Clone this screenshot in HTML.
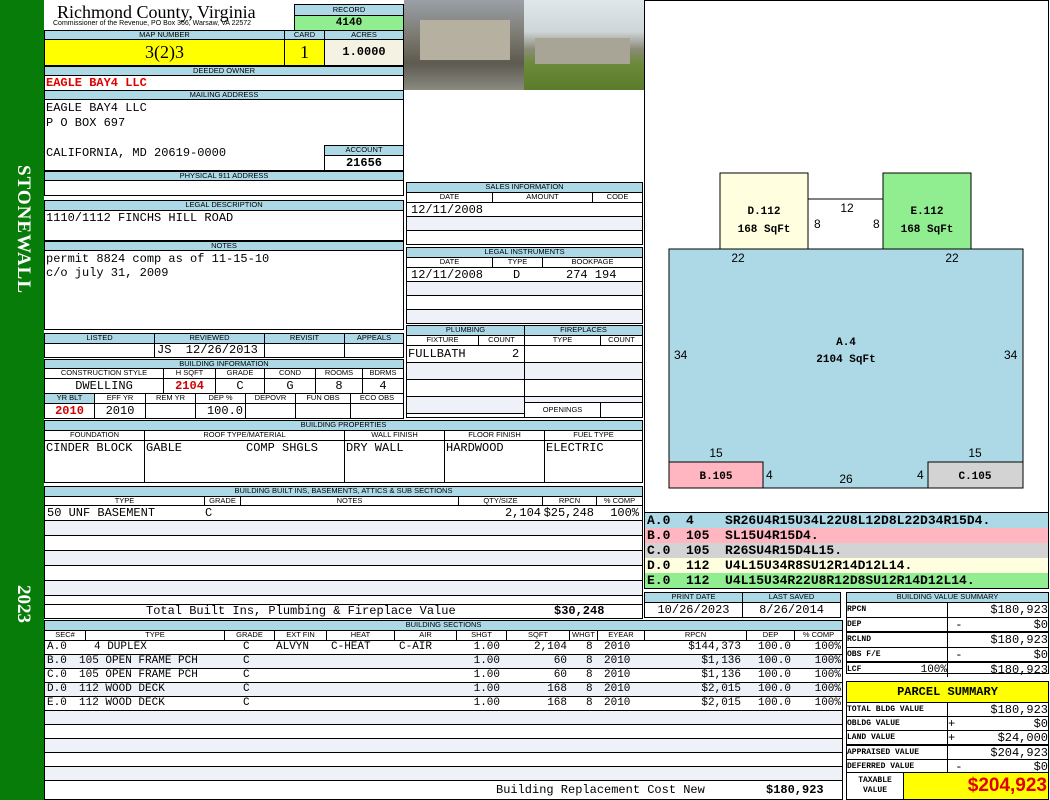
<!DOCTYPE html>
<html><head><meta charset="utf-8"><style>
body{margin:0;width:1050px;height:800px;overflow:hidden;background:#fff;position:relative;font-family:"Liberation Sans",sans-serif}
.a{position:absolute;box-sizing:border-box}
.h{position:absolute;box-sizing:border-box;background:#add8e6;border:1px solid #000;font-size:7.5px;text-align:center;line-height:8px;white-space:nowrap;overflow:hidden}
.s{position:absolute;box-sizing:border-box;background:#fff;border:1px solid #000;font-size:7.5px;text-align:center;line-height:8px;white-space:nowrap;overflow:hidden}
.b{position:absolute;box-sizing:border-box;border:1px solid #000;background:#fff}
.m{position:absolute;font-family:"Liberation Mono",monospace;font-size:12px;white-space:pre;line-height:13px}
.r{text-align:right}
.g{background:#eef2f8}
.row{position:absolute;left:0;width:1050px;height:14px;font-family:"Liberation Mono",monospace;font-size:11px;line-height:14px;white-space:pre}
.row span{position:absolute}
.row .R{text-align:right}
.v12{font-size:12px !important}
</style></head><body>
<div class="a" style="left:0;top:0;width:44px;height:800px;background:#087c08"></div>
<div class="a" style="left:10px;top:165px;width:24px;height:150px;color:#fff;font:bold 19px 'Liberation Serif',serif;writing-mode:vertical-rl;letter-spacing:1px">STONEWALL</div>
<div class="a" style="left:10px;top:585px;width:24px;height:50px;color:#fff;font:bold 19px 'Liberation Serif',serif;writing-mode:vertical-rl">2023</div>

<div class="a" style="left:57px;top:2px;font:18px 'Liberation Serif',serif">Richmond County, Virginia</div>
<div class="a" style="left:53px;top:20px;font:7px 'Liberation Sans';white-space:nowrap">Commissioner of the Revenue, PO Box 366, Warsaw, VA 22572</div>
<div class="h" style="left:294px;top:4px;width:110px;height:12px;line-height:10px">RECORD</div>
<div class="a" style="left:294px;top:15px;width:110px;height:16px;background:#90ee90;border:1px solid #000;font:bold 11px 'Liberation Mono';text-align:center;line-height:14px">4140</div>
<div class="h" style="left:44px;top:30px;width:241px;height:10px">MAP NUMBER</div>
<div class="h" style="left:284px;top:30px;width:41px;height:10px">CARD</div>
<div class="h" style="left:324px;top:30px;width:80px;height:10px">ACRES</div>
<div class="a" style="left:44px;top:39px;width:241px;height:27px;background:#ffff00;border:1px solid #000;font:18px 'Liberation Serif';text-align:center;line-height:25px">3(2)3</div>
<div class="a" style="left:284px;top:39px;width:41px;height:27px;background:#ffff00;border:1px solid #000;font:18px 'Liberation Serif';text-align:center;line-height:25px">1</div>
<div class="a" style="left:324px;top:39px;width:80px;height:27px;background:#f4f3e3;border:1px solid #000;font:bold 12px 'Liberation Mono';text-align:center;line-height:25px">1.0000</div>

<div class="a" style="left:404px;top:0;width:120px;height:90px;background:linear-gradient(#9aa0a8 0%,#7c7a70 40%,#5d5a50 70%,#8a8a80 100%)"></div>
<div class="a" style="left:420px;top:20px;width:90px;height:40px;background:#b6b0a0"></div>
<div class="a" style="left:524px;top:0;width:120px;height:90px;background:linear-gradient(#dfe7ea 0%,#cfd6d8 35%,#8a8a78 55%,#6d8a3a 70%,#5a7d2a 100%)"></div>
<div class="a" style="left:535px;top:38px;width:95px;height:26px;background:#a8a496"></div>

<div class="b" style="left:644px;top:0;width:405px;height:513px"></div>

<div class="h" style="left:44px;top:66px;width:360px;height:10px">DEEDED OWNER</div>
<div class="b" style="left:44px;top:75px;width:360px;height:16px"></div>
<div class="m" style="left:46px;top:77px;color:#e00000;font-weight:bold">EAGLE BAY4 LLC</div>
<div class="h" style="left:44px;top:90px;width:360px;height:10px">MAILING ADDRESS</div>
<div class="b" style="left:44px;top:99px;width:360px;height:72px"></div>
<div class="m" style="left:46px;top:102px">EAGLE BAY4 LLC</div>
<div class="m" style="left:46px;top:117px">P O BOX 697</div>
<div class="m" style="left:46px;top:147px">CALIFORNIA, MD 20619-0000</div>
<div class="h" style="left:324px;top:145px;width:80px;height:11px">ACCOUNT</div>
<div class="a" style="left:324px;top:155px;width:80px;height:16px;border:1px solid #000;font:bold 12px 'Liberation Mono';text-align:center;line-height:15px">21656</div>
<div class="h" style="left:44px;top:171px;width:360px;height:10px">PHYSICAL 911 ADDRESS</div>
<div class="b" style="left:44px;top:180px;width:360px;height:16px"></div>
<div class="h" style="left:44px;top:200px;width:360px;height:11px">LEGAL DESCRIPTION</div>
<div class="b" style="left:44px;top:210px;width:360px;height:31px"></div>
<div class="m" style="left:46px;top:212px">1110/1112 FINCHS HILL ROAD</div>
<div class="h" style="left:44px;top:241px;width:360px;height:10px">NOTES</div>
<div class="b" style="left:44px;top:250px;width:360px;height:80px"></div>
<div class="m" style="left:46px;top:253px">permit 8824 comp as of 11-15-10</div>
<div class="m" style="left:46px;top:267px">c/o july 31, 2009</div>

<!-- sales -->
<div class="h" style="left:406px;top:182px;width:237px;height:11px">SALES INFORMATION</div>
<div class="s" style="left:406px;top:192px;width:87px;height:11px">DATE</div>
<div class="s" style="left:492px;top:192px;width:101px;height:11px">AMOUNT</div>
<div class="s" style="left:592px;top:192px;width:51px;height:11px">CODE</div>
<div class="b" style="left:406px;top:202px;width:237px;height:15px"></div>
<div class="b g" style="left:406px;top:216px;width:237px;height:15px"></div>
<div class="b" style="left:406px;top:230px;width:237px;height:15px"></div>
<div class="m" style="left:411px;top:204px">12/11/2008</div>
<div class="h" style="left:406px;top:247px;width:237px;height:11px">LEGAL INSTRUMENTS</div>
<div class="s" style="left:406px;top:257px;width:87px;height:11px">DATE</div>
<div class="s" style="left:492px;top:257px;width:51px;height:11px">TYPE</div>
<div class="s" style="left:542px;top:257px;width:101px;height:11px">BOOKPAGE</div>
<div class="b" style="left:406px;top:267px;width:237px;height:15px"></div>
<div class="b g" style="left:406px;top:281px;width:237px;height:15px"></div>
<div class="b" style="left:406px;top:295px;width:237px;height:15px"></div>
<div class="b g" style="left:406px;top:309px;width:237px;height:15px"></div>
<div class="m" style="left:411px;top:269px">12/11/2008</div>
<div class="m" style="left:513px;top:269px">D</div>
<div class="m" style="left:566px;top:269px">274 194</div>

<!-- plumbing -->
<div class="h" style="left:406px;top:325px;width:119px;height:11px">PLUMBING</div>
<div class="h" style="left:524px;top:325px;width:119px;height:11px">FIREPLACES</div>
<div class="s" style="left:406px;top:335px;width:73px;height:11px">FIXTURE</div>
<div class="s" style="left:478px;top:335px;width:47px;height:11px">COUNT</div>
<div class="s" style="left:524px;top:335px;width:77px;height:11px">TYPE</div>
<div class="s" style="left:600px;top:335px;width:43px;height:11px">COUNT</div>
<div class="b" style="left:406px;top:345px;width:119px;height:73px;background:repeating-linear-gradient(#fff 0 16px,#000 16px 17px,#eef2f8 17px 33px,#000 33px 34px)"></div>
<div class="b" style="left:524px;top:345px;width:119px;height:58px;background:repeating-linear-gradient(#fff 0 16px,#000 16px 17px,#eef2f8 17px 33px,#000 33px 34px)"></div>
<div class="b" style="left:524px;top:402px;width:119px;height:16px"></div>
<div class="s" style="left:524px;top:402px;width:77px;height:16px;line-height:14px">OPENINGS</div>
<div class="m" style="left:408px;top:348px">FULLBATH</div>
<div class="m" style="left:512px;top:348px">2</div>

<!-- listed -->
<div class="h" style="left:44px;top:333px;width:111px;height:11px">LISTED</div>
<div class="h" style="left:154px;top:333px;width:111px;height:11px">REVIEWED</div>
<div class="h" style="left:264px;top:333px;width:81px;height:11px">REVISIT</div>
<div class="h" style="left:344px;top:333px;width:60px;height:11px">APPEALS</div>
<div class="b" style="left:44px;top:343px;width:111px;height:15px"></div>
<div class="b" style="left:154px;top:343px;width:111px;height:15px"></div>
<div class="b" style="left:264px;top:343px;width:81px;height:15px"></div>
<div class="b" style="left:344px;top:343px;width:60px;height:15px"></div>
<div class="m" style="left:157px;top:344px">JS  12/26/2013</div>

<!-- building info -->
<div class="h" style="left:44px;top:359px;width:360px;height:10px">BUILDING INFORMATION</div>
<div class="s" style="left:44px;top:368px;width:120px;height:11px">CONSTRUCTION STYLE</div>
<div class="s" style="left:163px;top:368px;width:53px;height:11px">H SQFT</div>
<div class="s" style="left:215px;top:368px;width:50px;height:11px">GRADE</div>
<div class="s" style="left:264px;top:368px;width:52px;height:11px">COND</div>
<div class="s" style="left:315px;top:368px;width:48px;height:11px">ROOMS</div>
<div class="s" style="left:362px;top:368px;width:42px;height:11px">BDRMS</div>
<div class="b" style="left:44px;top:378px;width:120px;height:16px"></div><div class="m" style="left:44px;top:380px;width:120px;text-align:center">DWELLING</div>
<div class="b" style="left:163px;top:378px;width:53px;height:16px"></div><div class="m" style="left:163px;top:380px;width:53px;text-align:center;color:#d00000;font-weight:bold">2104</div>
<div class="b" style="left:215px;top:378px;width:50px;height:16px"></div><div class="m" style="left:215px;top:380px;width:50px;text-align:center">C</div>
<div class="b" style="left:264px;top:378px;width:52px;height:16px"></div><div class="m" style="left:264px;top:380px;width:52px;text-align:center">G</div>
<div class="b" style="left:315px;top:378px;width:48px;height:16px"></div><div class="m" style="left:315px;top:380px;width:48px;text-align:center">8</div>
<div class="b" style="left:362px;top:378px;width:42px;height:16px"></div><div class="m" style="left:362px;top:380px;width:42px;text-align:center">4</div>
<div class="h" style="left:44px;top:393px;width:51px;height:11px">YR BLT</div>
<div class="s" style="left:94px;top:393px;width:52px;height:11px">EFF YR</div>
<div class="s" style="left:145px;top:393px;width:51px;height:11px">REM YR</div>
<div class="s" style="left:195px;top:393px;width:51px;height:11px">DEP %</div>
<div class="s" style="left:245px;top:393px;width:51px;height:11px">DEPOVR</div>
<div class="s" style="left:295px;top:393px;width:56px;height:11px">FUN OBS</div>
<div class="s" style="left:350px;top:393px;width:54px;height:11px">ECO OBS</div>
<div class="b" style="left:44px;top:403px;width:51px;height:16px"></div><div class="m" style="left:44px;top:405px;width:51px;text-align:center;color:#d00000;font-weight:bold">2010</div>
<div class="b" style="left:94px;top:403px;width:52px;height:16px"></div><div class="m" style="left:94px;top:405px;width:52px;text-align:center">2010</div>
<div class="b" style="left:145px;top:403px;width:51px;height:16px"></div>
<div class="b" style="left:195px;top:403px;width:51px;height:16px"></div><div class="m" style="left:195px;top:405px;width:48px;text-align:right">100.0</div>
<div class="b" style="left:245px;top:403px;width:51px;height:16px"></div>
<div class="b" style="left:295px;top:403px;width:56px;height:16px"></div>
<div class="b" style="left:350px;top:403px;width:54px;height:16px"></div>

<!-- properties -->
<div class="h" style="left:44px;top:420px;width:599px;height:11px">BUILDING PROPERTIES</div>
<div class="s" style="left:44px;top:430px;width:101px;height:11px">FOUNDATION</div>
<div class="s" style="left:144px;top:430px;width:201px;height:11px">ROOF TYPE/MATERIAL</div>
<div class="s" style="left:344px;top:430px;width:101px;height:11px">WALL FINISH</div>
<div class="s" style="left:444px;top:430px;width:101px;height:11px">FLOOR FINISH</div>
<div class="s" style="left:544px;top:430px;width:99px;height:11px">FUEL TYPE</div>
<div class="b" style="left:44px;top:440px;width:101px;height:43px"></div>
<div class="b" style="left:144px;top:440px;width:201px;height:43px"></div>
<div class="b" style="left:344px;top:440px;width:101px;height:43px"></div>
<div class="b" style="left:444px;top:440px;width:101px;height:43px"></div>
<div class="b" style="left:544px;top:440px;width:99px;height:43px"></div>
<div class="m" style="left:46px;top:442px">CINDER BLOCK</div>
<div class="m" style="left:146px;top:442px">GABLE</div>
<div class="m" style="left:246px;top:442px">COMP SHGLS</div>
<div class="m" style="left:346px;top:442px">DRY WALL</div>
<div class="m" style="left:446px;top:442px">HARDWOOD</div>
<div class="m" style="left:546px;top:442px">ELECTRIC</div>

<!-- built ins -->
<div class="h" style="left:44px;top:486px;width:599px;height:11px">BUILDING BUILT INS, BASEMENTS, ATTICS &amp; SUB SECTIONS</div>
<div class="s" style="left:44px;top:496px;width:161px;height:10px">TYPE</div>
<div class="s" style="left:204px;top:496px;width:37px;height:10px">GRADE</div>
<div class="s" style="left:240px;top:496px;width:219px;height:10px">NOTES</div>
<div class="s" style="left:458px;top:496px;width:85px;height:10px">QTY/SIZE</div>
<div class="s" style="left:542px;top:496px;width:55px;height:10px">RPCN</div>
<div class="s" style="left:596px;top:496px;width:47px;height:10px">% COMP</div>
<div class="b" style="left:44px;top:505px;width:599px;height:100px;background:repeating-linear-gradient(#fff 0 14px,#000 14px 15px,#eef2f8 15px 29px,#000 29px 30px)"></div>
<div class="m" style="left:47px;top:507px">50 UNF BASEMENT</div>
<div class="m" style="left:205px;top:507px">C</div>
<div class="m r" style="left:441px;top:507px;width:100px">2,104</div>
<div class="m r" style="left:494px;top:507px;width:100px">$25,248</div>
<div class="m r" style="left:539px;top:507px;width:100px">100%</div>
<div class="b" style="left:44px;top:604px;width:599px;height:15px"></div>
<div class="m" style="left:146px;top:605px">Total Built Ins, Plumbing &amp; Fireplace Value</div>
<div class="m" style="left:554px;top:605px;font-weight:bold">$30,248</div>

<!-- building sections -->
<div class="h" style="left:44px;top:620px;width:799px;height:11px">BUILDING SECTIONS</div>
<div class="s" style="left:44px;top:630px;width:42px;height:11px">SEC#</div>
<div class="s" style="left:85px;top:630px;width:140px;height:11px">TYPE</div>
<div class="s" style="left:224px;top:630px;width:51px;height:11px">GRADE</div>
<div class="s" style="left:274px;top:630px;width:53px;height:11px">EXT FIN</div>
<div class="s" style="left:326px;top:630px;width:69px;height:11px">HEAT</div>
<div class="s" style="left:394px;top:630px;width:63px;height:11px">AIR</div>
<div class="s" style="left:456px;top:630px;width:51px;height:11px">SHGT</div>
<div class="s" style="left:506px;top:630px;width:64px;height:11px">SQFT</div>
<div class="s" style="left:569px;top:630px;width:29px;height:11px">WHGT</div>
<div class="s" style="left:597px;top:630px;width:48px;height:11px">EYEAR</div>
<div class="s" style="left:644px;top:630px;width:103px;height:11px">RPCN</div>
<div class="s" style="left:746px;top:630px;width:49px;height:11px">DEP</div>
<div class="s" style="left:794px;top:630px;width:49px;height:11px">% COMP</div>
<div class="b" style="left:44px;top:640px;width:799px;height:141px;background:repeating-linear-gradient(#fff 0 13px,#000 13px 14px,#eef2f8 14px 27px,#000 27px 28px)"></div>

<div class="row" style="top:640px"><span style="left:47px">A.0</span><span style="left:94px">4 DUPLEX</span><span style="left:243px">C</span><span style="left:276px">ALVYN</span><span style="left:331px">C-HEAT</span><span style="left:399px">C-AIR</span><span class="R" style="right:550px">1.00</span><span class="R" style="right:483px">2,104</span><span style="left:586px">8</span><span style="left:604px">2010</span><span class="R" style="right:309px">$144,373</span><span class="R" style="right:259px">100.0</span><span class="R" style="right:209px">100%</span></div>
<div class="row" style="top:654px"><span style="left:47px">B.0</span><span style="left:79px">105 OPEN FRAME PCH</span><span style="left:243px">C</span><span class="R" style="right:550px">1.00</span><span class="R" style="right:483px">60</span><span style="left:586px">8</span><span style="left:604px">2010</span><span class="R" style="right:309px">$1,136</span><span class="R" style="right:259px">100.0</span><span class="R" style="right:209px">100%</span></div>
<div class="row" style="top:668px"><span style="left:47px">C.0</span><span style="left:79px">105 OPEN FRAME PCH</span><span style="left:243px">C</span><span class="R" style="right:550px">1.00</span><span class="R" style="right:483px">60</span><span style="left:586px">8</span><span style="left:604px">2010</span><span class="R" style="right:309px">$1,136</span><span class="R" style="right:259px">100.0</span><span class="R" style="right:209px">100%</span></div>
<div class="row" style="top:682px"><span style="left:47px">D.0</span><span style="left:79px">112 WOOD DECK</span><span style="left:243px">C</span><span class="R" style="right:550px">1.00</span><span class="R" style="right:483px">168</span><span style="left:586px">8</span><span style="left:604px">2010</span><span class="R" style="right:309px">$2,015</span><span class="R" style="right:259px">100.0</span><span class="R" style="right:209px">100%</span></div>
<div class="row" style="top:696px"><span style="left:47px">E.0</span><span style="left:79px">112 WOOD DECK</span><span style="left:243px">C</span><span class="R" style="right:550px">1.00</span><span class="R" style="right:483px">168</span><span style="left:586px">8</span><span style="left:604px">2010</span><span class="R" style="right:309px">$2,015</span><span class="R" style="right:259px">100.0</span><span class="R" style="right:209px">100%</span></div>

<div class="b" style="left:44px;top:780px;width:799px;height:20px"></div>
<div class="m" style="left:496px;top:784px">Building Replacement Cost New</div>
<div class="m" style="left:766px;top:784px;font-weight:bold">$180,923</div>

<!-- drawing -->
<svg class="a" style="left:644px;top:0" width="405" height="513" font-family="Liberation Sans" font-size="12">
<rect x="76" y="173" width="88" height="77" fill="#ffffe0" stroke="#000"/>
<rect x="239" y="173" width="88" height="77" fill="#90ee90" stroke="#000"/>
<rect x="25" y="249" width="354" height="239" fill="#add8e6" stroke="#000"/>
<rect x="25" y="462" width="94" height="26" fill="#ffb6c1" stroke="#000"/>
<rect x="284" y="462" width="95" height="26" fill="#d3d3d3" stroke="#000"/>
<line x1="164" y1="199" x2="239" y2="199" stroke="#000"/>
<g font-family="Liberation Mono" font-size="11" font-weight="bold" text-anchor="middle">
<text x="120" y="214">D.112</text><text x="120" y="232">168 SqFt</text>
<text x="283" y="214">E.112</text><text x="283" y="232">168 SqFt</text>
<text x="202" y="345">A.4</text><text x="202" y="362">2104 SqFt</text>
<text x="72" y="479">B.105</text><text x="331" y="479">C.105</text></g>
<text x="203" y="212" text-anchor="middle">12</text>
<text x="170" y="228">8</text><text x="229" y="228">8</text>
<text x="94" y="262" text-anchor="middle">22</text><text x="308" y="262" text-anchor="middle">22</text>
<text x="30" y="359">34</text><text x="360" y="359">34</text>
<text x="72" y="457" text-anchor="middle">15</text><text x="331" y="457" text-anchor="middle">15</text>
<text x="122" y="479">4</text><text x="273" y="479">4</text>
<text x="202" y="483" text-anchor="middle">26</text>
</svg>

<!-- codes -->
<div class="a" style="left:644px;top:512px;width:405px;height:77px;border:1px solid #000;font:bold 13px 'Liberation Mono';white-space:pre;line-height:15px"><div style="background:#add8e6;padding-left:2px;height:15px">A.0  4    SR26U4R15U34L22U8L12D8L22D34R15D4.</div><div style="background:#ffb6c1;padding-left:2px;height:15px">B.0  105  SL15U4R15D4.</div><div style="background:#d3d3d3;padding-left:2px;height:15px">C.0  105  R26SU4R15D4L15.</div><div style="background:#ffffe0;padding-left:2px;height:15px">D.0  112  U4L15U34R8SU12R14D12L14.</div><div style="background:#90ee90;padding-left:2px;height:15px">E.0  112  U4L15U34R22U8R12D8SU12R14D12L14.</div></div>

<!-- print date -->
<div class="h" style="left:644px;top:592px;width:99px;height:11px">PRINT DATE</div>
<div class="h" style="left:742px;top:592px;width:99px;height:11px">LAST SAVED</div>
<div class="b" style="left:644px;top:602px;width:99px;height:16px"></div><div class="m" style="left:644px;top:604px;width:99px;text-align:center">10/26/2023</div>
<div class="b" style="left:742px;top:602px;width:99px;height:16px"></div><div class="m" style="left:742px;top:604px;width:99px;text-align:center">8/26/2014</div>

<!-- value summary -->
<div class="h" style="left:846px;top:592px;width:203px;height:11px">BUILDING VALUE SUMMARY</div>
<div class="a" style="left:846px;top:602px;width:203px;height:72px;border:1px solid #000;font:8px 'Liberation Mono';line-height:14px">
<div style="display:flex;border-bottom:1px solid #000;height:14px"><div style="width:100px;border-right:1px solid #000;font-weight:bold">RPCN</div><div style="flex:1;text-align:right;font-size:12px">$180,923</div></div>
<div style="display:flex;border-bottom:2px solid #000;height:13px"><div style="width:100px;border-right:1px solid #000;font-weight:bold">DEP</div><div style="flex:1;display:flex;justify-content:space-between;font-size:12px"><span>&nbsp;-</span><span>$0</span></div></div>
<div style="display:flex;border-bottom:1px solid #000;height:14px"><div style="width:100px;border-right:1px solid #000;font-weight:bold">RCLND</div><div style="flex:1;text-align:right;font-size:12px">$180,923</div></div>
<div style="display:flex;border-bottom:2px solid #000;height:13px"><div style="width:100px;border-right:1px solid #000;font-weight:bold">OBS F/E</div><div style="flex:1;display:flex;justify-content:space-between;font-size:12px"><span>&nbsp;-</span><span>$0</span></div></div>
<div style="display:flex;height:14px"><div style="width:100px;border-right:1px solid #000;font-weight:bold;display:flex;justify-content:space-between"><span>LCF</span><span style="font-size:11px;font-weight:normal">100%</span></div><div style="flex:1;text-align:right;font-size:12px">$180,923</div></div>
</div>

<!-- parcel summary -->
<div class="a" style="left:846px;top:681px;width:203px;height:22px;background:#ffff00;border:1px solid #000;font:bold 12px 'Liberation Mono';text-align:center;line-height:20px">PARCEL SUMMARY</div>
<div class="a" style="left:846px;top:702px;width:203px;height:71px;border:1px solid #000;font:bold 8px 'Liberation Mono';line-height:13px">
<div style="display:flex;border-bottom:1px solid #000;height:13px"><div style="width:100px;border-right:1px solid #000">TOTAL BLDG VALUE</div><div style="flex:1;text-align:right;font:12px 'Liberation Mono'">$180,923</div></div>
<div style="display:flex;border-bottom:1px solid #000;height:13px"><div style="width:100px;border-right:1px solid #000">OBLDG VALUE</div><div style="flex:1;display:flex;justify-content:space-between;font:12px 'Liberation Mono'"><span>+</span><span>$0</span></div></div>
<div style="display:flex;border-bottom:2px solid #000;height:13px"><div style="width:100px;border-right:1px solid #000">LAND VALUE</div><div style="flex:1;display:flex;justify-content:space-between;font:12px 'Liberation Mono'"><span>+</span><span>$24,000</span></div></div>
<div style="display:flex;border-bottom:1px solid #000;height:13px"><div style="width:100px;border-right:1px solid #000">APPRAISED VALUE</div><div style="flex:1;text-align:right;font:12px 'Liberation Mono'">$204,923</div></div>
<div style="display:flex;height:14px"><div style="width:100px;border-right:1px solid #000">DEFERRED VALUE</div><div style="flex:1;display:flex;justify-content:space-between;font:12px 'Liberation Mono'"><span>&nbsp;-</span><span>$0</span></div></div>
</div>
<div class="b" style="left:846px;top:772px;width:58px;height:28px;font:bold 8px 'Liberation Mono';text-align:center;line-height:10px;padding-top:3px">TAXABLE<br>VALUE</div>
<div class="a" style="left:903px;top:772px;width:146px;height:28px;background:#ffff00;border:1px solid #000;color:#e00000;font:bold 19px 'Liberation Sans';text-align:right;line-height:26px;padding-right:1px">$204,923</div>
</body></html>
